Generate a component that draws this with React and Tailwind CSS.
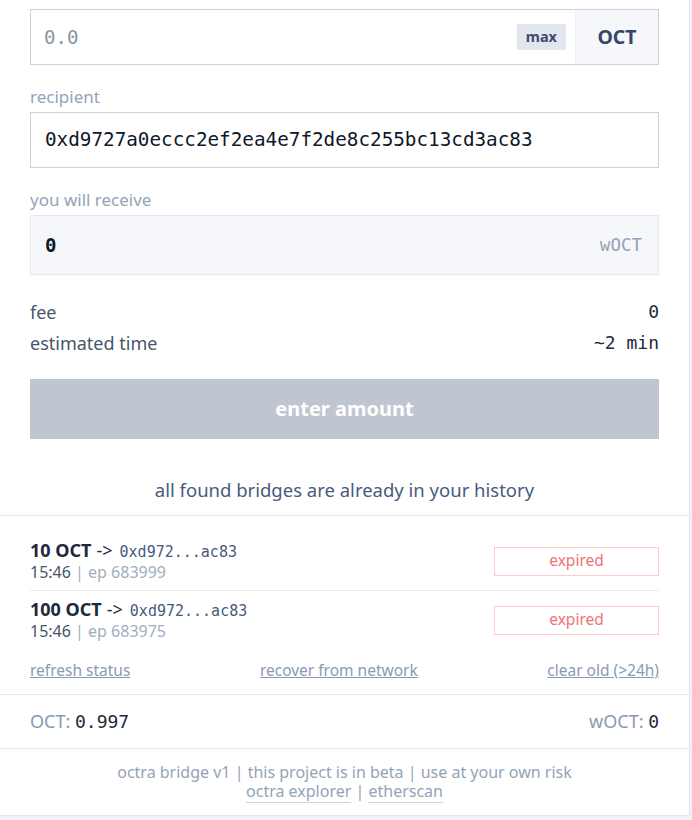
const MONO = "font-['DejaVu_Sans_Mono',monospace]"

// Bridge history entries (newest first)
const HISTORY = [
  { amount: '10 OCT', to: '0xd972...ac83', time: '15:46', epoch: 683999, status: 'expired' },
  { amount: '100 OCT', to: '0xd972...ac83', time: '15:46', epoch: 683975, status: 'expired' },
]

function HistoryRow({ item, last }) {
  return (
    <div className={`flex items-center justify-between py-[7px] ${last ? '' : 'border-b border-[#e8ecf2]'}`}>
      <div className="flex flex-col">
        <div className="flex h-[22px] items-baseline overflow-visible text-[18px] leading-[22px]">
          <span className="font-bold text-[#1e293b]">{item.amount}</span>
          <span className="ml-[5px] text-[#1e293b]">-&gt;</span>
          <span className={`ml-[7px] text-[15px] leading-[22px] text-[#475a7c] ${MONO}`}>{item.to}</span>
        </div>
        <div className="h-[22px] text-[16px] leading-[22px]">
          <span className="text-[#475569]">{item.time}</span>
          <span className="text-[#a0aec0]"> | ep {item.epoch}</span>
        </div>
      </div>
      <div className="flex h-[29px] w-[165px] items-center justify-center border border-[#fecaca] text-[15.5px] text-[#f07373]">
        {item.status}
      </div>
    </div>
  )
}

export default function App() {
  return (
    <div className="min-h-[820px] bg-[#f1f3f7] font-['Noto_Sans',sans-serif]">
      <div className="w-[690px] border-r border-b border-[#dfe3ea] bg-white">
        <div className="px-[30px] pt-[9px]">
          {/* amount */}
          <div className="flex h-[56px] border border-[#cbd2dc]">
            <div className={`flex flex-1 items-center pl-[13px] text-[19px] text-[#8a94a6] ${MONO}`}>0.0</div>
            <div className="flex items-center pr-[9px]">
              <span className="flex h-[26px] items-center bg-[#e2e6ee] px-[9px] text-[14.5px] font-bold text-[#3d4c6c]">max</span>
            </div>
            <div className="flex w-[83px] items-center justify-center border-l border-[#eef1f5] bg-[#f5f7fa] text-[19.5px] font-bold text-[#34466b]">
              OCT
            </div>
          </div>

          {/* recipient */}
          <div className="mt-[20px] text-[17px] leading-[24px] text-[#94a3b8]">recipient</div>
          <div className={`mt-[3px] flex h-[56px] items-center border border-[#cbd2dc] pl-[14px] text-[19.3px] text-[#0f172a] ${MONO}`}>
            0xd9727a0eccc2ef2ea4e7f2de8c255bc13cd3ac83
          </div>

          {/* receive */}
          <div className="mt-[20px] text-[17px] leading-[24px] text-[#94a3b8]">you will receive</div>
          <div className="mt-[3px] flex h-[60px] items-center justify-between border border-[#e4e8ef] bg-[#f5f7fa] pl-[14px] pr-[16px]">
            <span className={`text-[19px] font-bold text-[#0f172a] ${MONO}`}>0</span>
            <span className={`text-[17.5px] text-[#94a3b8] ${MONO}`}>wOCT</span>
          </div>

          {/* fee / time */}
          <div className="mt-[25px] flex flex-col gap-[7px] text-[18px] leading-[24px] text-[#475569]">
            <div className="flex justify-between">
              <span>fee</span>
              <span className={`text-[#1e293b] ${MONO}`}>0</span>
            </div>
            <div className="flex justify-between">
              <span>estimated time</span>
              <span className={`text-[#1e293b] ${MONO}`}>~2 min</span>
            </div>
          </div>

          <button className="mt-[24px] flex h-[60px] w-full items-center justify-center bg-[#c0c6d0] text-[20px] font-bold text-white">
            enter amount
          </button>

          <div className="pb-[13px] pt-[39px] text-center text-[18.5px] leading-[24px] text-[#4a5a80]">
            all found bridges are already in your history
          </div>
        </div>

        {/* history */}
        <div className="border-t border-[#e4e8ef] px-[30px] pt-[16px]">
          {HISTORY.map((h, i) => (
            <HistoryRow key={h.epoch} item={h} last={i === HISTORY.length - 1} />
          ))}
          <div className="flex h-[22px] justify-between text-[15.5px] leading-[22px] text-[#8a9ab5] mt-[10px] mb-[13px]">
            <span className="underline">refresh status</span>
            <span className="underline">recover from network</span>
            <span className="underline">clear old (&gt;24h)</span>
          </div>
        </div>

        {/* balances */}
        <div className="flex h-[54px] items-center justify-between border-t border-[#e4e8ef] px-[30px] text-[18px] leading-[24px] text-[#8a99b0]">
          <span>OCT: <span className={`text-[#1e293b] ${MONO}`}>0.997</span></span>
          <span>wOCT: <span className={`text-[#1e293b] ${MONO}`}>0</span></span>
        </div>

        {/* footer */}
        <div className="flex h-[67px] flex-col items-center border-t border-[#e4e8ef] pt-[14px] text-[16px] leading-[19px] text-[#94a3b8]">
          <div className="h-[19px]">octra bridge v1 | this project is in beta | use at your own risk</div>
          <div className="h-[19px]">
            <span className="border-b border-[#cbd5e1]">octra explorer</span>
            {' | '}
            <span className="border-b border-[#cbd5e1]">etherscan</span>
          </div>
        </div>
      </div>
    </div>
  )
}
